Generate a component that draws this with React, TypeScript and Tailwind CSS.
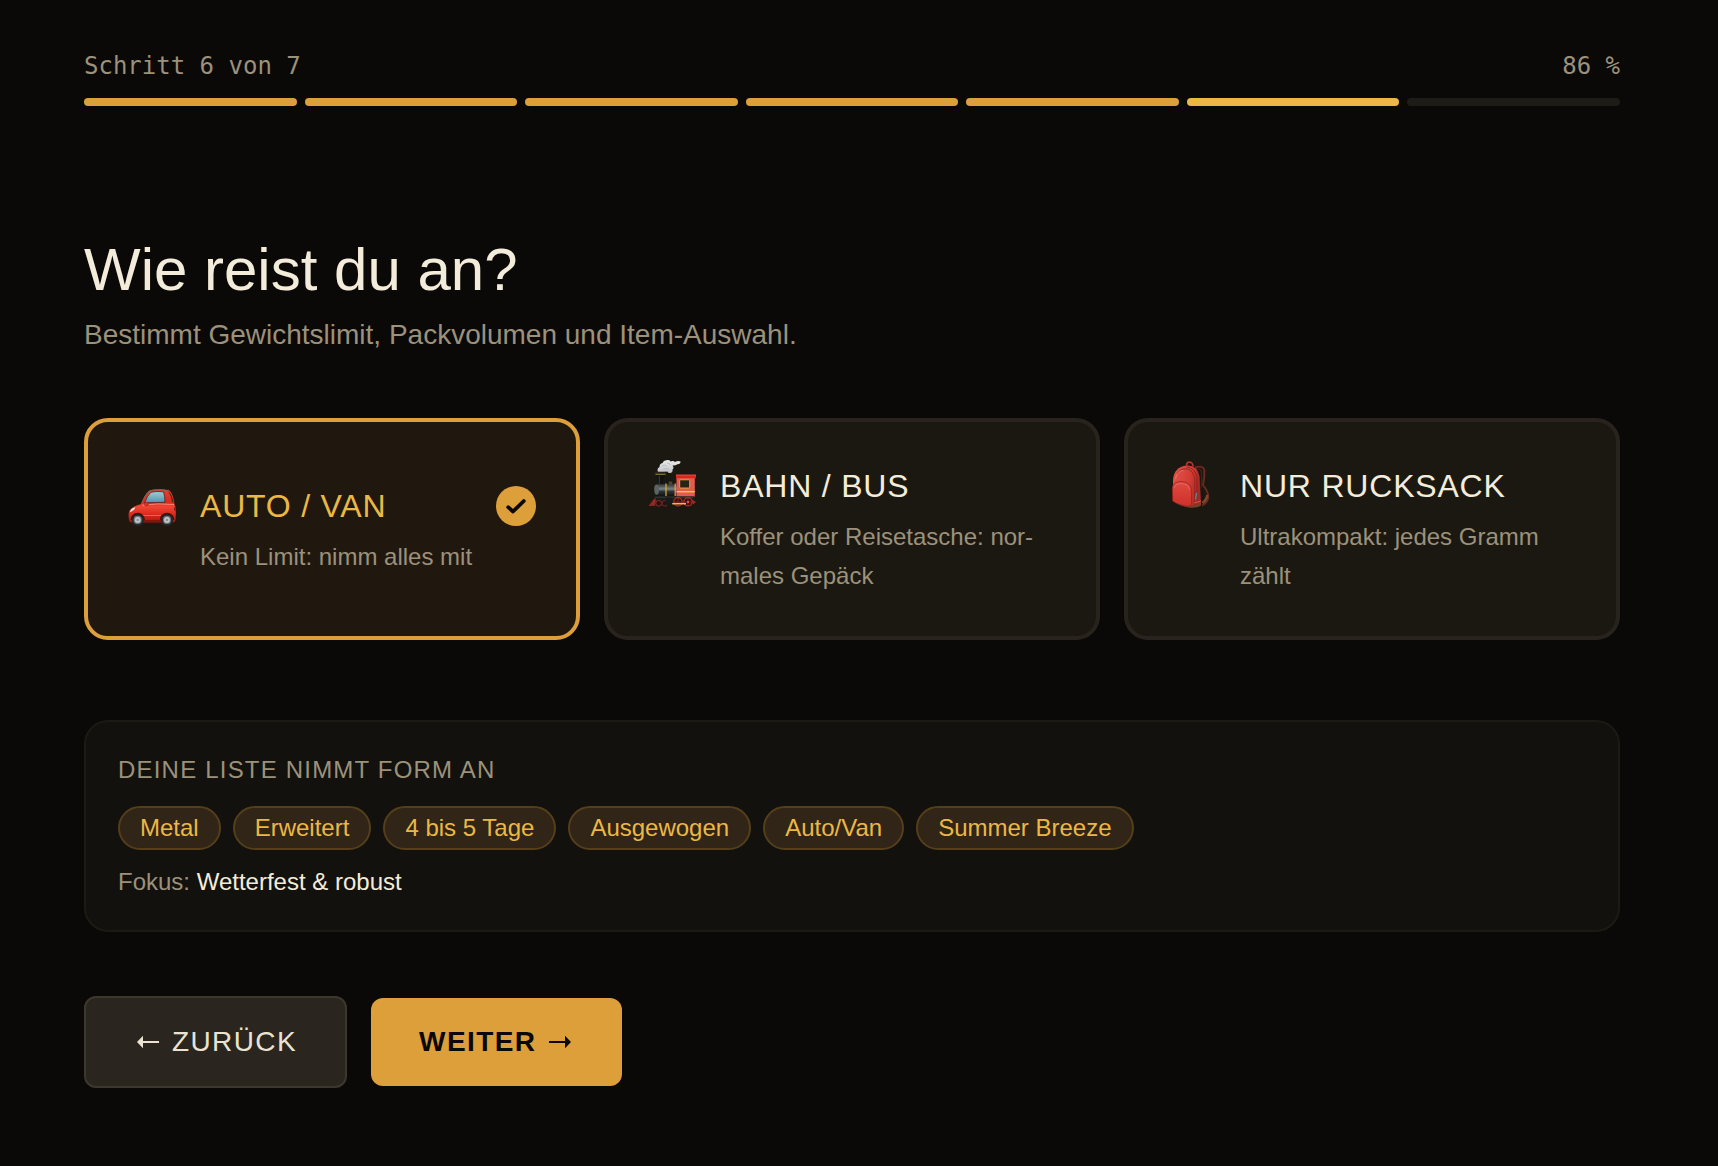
import { useState } from "react";
import type { ReactNode } from "react";

function CarIcon() {
  return (
    <svg viewBox="0 2 48 48" className="size-12 shrink-0 overflow-visible" aria-hidden="true">
      <defs>
        <linearGradient id="carBody" x1="0" y1="0" x2="0" y2="1">
          <stop offset="0" stopColor="#e8402f" />
          <stop offset="0.4" stopColor="#d92a1d" />
          <stop offset="0.52" stopColor="#ee4636" />
          <stop offset="0.72" stopColor="#de2f21" />
          <stop offset="1" stopColor="#a3170f" />
        </linearGradient>
        <linearGradient id="carGlass" x1="0" y1="0" x2="0" y2="1">
          <stop offset="0" stopColor="#9fced6" />
          <stop offset="1" stopColor="#4e93ad" />
        </linearGradient>
      </defs>
      <path d="M40 10L40.5 9" stroke="#555" strokeWidth="0.6" />
      <path d="M1 40Q0 33 1.500 30.500Q4 26.500 13 24Q17 14 21 10.800Q24 9 32 9.200Q39 9.400 42 11Q45.500 15 46.500 24Q48.500 29 47.500 40Q47 42.500 44 42.500H4Q1.500 42.500 1 40Z" fill="url(#carBody)" />
      <path d="M13.500 23.500Q17.500 14 21.500 11Q25 9.600 32 9.700Q38.500 9.800 41.500 11.300" fill="none" stroke="#6c6b69" strokeWidth="0.9" />
      <path d="M16.500 22.800Q19.500 15 23 12.200Q28 11 35.500 11.800Q37 16 37 22.300Z" fill="url(#carGlass)" stroke="#542019" strokeWidth="0.8" />
      <path d="M41 11.500Q44.500 15.500 45.500 22.500L44.200 22Q43 15.500 40.500 11.700Z" fill="#4b2a25" />
      <path d="M14 25.200Q30 23 46 24.500" fill="none" stroke="#ff8b78" strokeWidth="0.9" />
      <path d="M15 35.500H33" stroke="#f77662" strokeWidth="0.7" />
      <path d="M14 41H34" stroke="#7b100c" strokeWidth="1.500" />
      <path d="M2 31.500Q3 28.200 7.200 27.200Q7 30 2.700 32Z" fill="#f6e9e3" />
      <path d="M46.200 26.500Q47.700 29 47.500 31L46 30Z" fill="#7f120d" />
      <ellipse cx="18.500" cy="24" rx="2.100" ry="1.900" fill="#e02d20" stroke="#9c160f" strokeWidth="0.4" />
      <path d="M2.500 40A7.200 7.200 0 0 1 17 40M31.800 40A7.200 7.200 0 0 1 46.300 40" fill="#4a0d09" />
      {[9.7, 39].map((cx) => (
        <g key={cx}>
          <circle cx={cx} cy="39.900" r="6.200" fill="#23262a" />
          <circle cx={cx} cy="39.900" r="4.100" fill="#74787b" />
          <circle cx={cx} cy="39.900" r="2.900" fill="#c3c6c8" />
          <circle cx={cx} cy="39.900" r="1.200" fill="#8a8d90" />
        </g>
      ))}
    </svg>
  );
}

function TrainIcon() {
  return (
    <svg viewBox="0 2 48 48" className="size-12 shrink-0 overflow-visible" aria-hidden="true">
      <defs>
        <linearGradient id="boiler" x1="0" y1="0" x2="0" y2="1">
          <stop offset="0" stopColor="#2b3030" />
          <stop offset="0.4" stopColor="#7c8483" />
          <stop offset="0.6" stopColor="#2d3232" />
          <stop offset="1" stopColor="#0d0f0f" />
        </linearGradient>
        <linearGradient id="smoke" x1="0" y1="0" x2="0" y2="1">
          <stop offset="0" stopColor="#ececee" />
          <stop offset="1" stopColor="#bfc0c3" />
        </linearGradient>
      </defs>
      <path d="M10 12Q8.500 8.500 11.500 7Q11.500 3.500 14.500 3Q15.500 0 18.500 0.200Q21.500 -0.500 22.500 1.500Q25.500 0.500 27 2Q30 0.500 32.500 1.500Q32.800 4 29.500 4.200Q27 6 24.500 5.500Q26.500 8 24.500 9.500Q25 12 22.500 13Q20 13.500 19.500 11.500Q15 12.800 10 12Z" fill="url(#smoke)" />
      <path d="M14 6Q16 4 18.500 6M19 3Q22 3 22.500 5M15 9.500Q18 7.500 21 9.500" fill="none" stroke="#b5b6ba" strokeWidth="0.8" />
      <path d="M7 11.700H18V15H7Z" fill="#26251f" />
      <path d="M7.500 14.300H17.500" stroke="#a98a34" strokeWidth="0.9" />
      <path d="M8 15.200H17L14.800 20V24.500H10V20Z" fill="#111212" />
      <path d="M11.300 16V24" stroke="#3c4040" strokeWidth="1" />
      <rect x="6.500" y="24" width="22.500" height="12.500" rx="3" fill="url(#boiler)" />
      <ellipse cx="8.700" cy="29.800" rx="2.300" ry="5" fill="#5b6463" />
      <path d="M20.700 24.500V22.500Q22.500 19.800 24.300 22.500V24.500Z" fill="#54443c" />
      <path d="M18 23.500V36M27.200 23.500V36" stroke="#d9ac3a" strokeWidth="1.200" />
      <path d="M28.500 18H46.800V37H28.500Z" fill="#e45a4e" />
      <path d="M28 14.700H48V18.200H28Z" fill="#d9271f" />
      <path d="M28 15.100H48" stroke="#f45f4c" strokeWidth="0.7" />
      <rect x="31.700" y="19.800" width="10" height="8.200" rx="0.800" fill="#27241a" stroke="#d9a63b" strokeWidth="1" />
      <path d="M28.500 31.700H46.800" stroke="#f4cc52" strokeWidth="1.300" />
      <path d="M5.500 36.300H46.500V41H5.500Z" fill="#1b1d1d" />
      <path d="M7 37.200H45.500" stroke="#484b4a" strokeWidth="0.700" />
      <path d="M0.300 46L6.200 38.500H8L7.300 46Z" fill="#7d231f" />
      <path d="M2.500 45.500L6.500 40M5 45.500L7 40" stroke="#b03a32" strokeWidth="0.600" />
      <circle cx="10.700" cy="43.300" r="2.900" fill="#251312" stroke="#8f2924" strokeWidth="1" />
      <circle cx="16.800" cy="43.300" r="2.800" fill="#251312" stroke="#7b2420" strokeWidth="1" />
      <rect x="17.500" y="37.500" width="6.500" height="7.500" rx="1" fill="#181a1a" />
      <circle cx="30" cy="41.800" r="4.200" fill="#301312" stroke="#b22d27" strokeWidth="1.200" />
      <circle cx="40" cy="41.800" r="4.200" fill="#301312" stroke="#b22d27" strokeWidth="1.200" />
      <path d="M30 38V46M26 42H34M40 38V46M36 42H44" stroke="#982824" strokeWidth="0.700" />
      <path d="M24.200 43.700H38" stroke="#edbb45" strokeWidth="1.500" />
      <circle cx="40" cy="42" r="1.200" fill="#e94b40" />
      <path d="M43.500 39.500L48 42L45 44.500Z" fill="#a92722" />
    </svg>
  );
}

function BackpackIcon() {
  return (
    <svg viewBox="0 2 48 48" className="size-12 shrink-0 overflow-visible" aria-hidden="true">
      <defs>
        <linearGradient id="packBody" x1="0" y1="0" x2="1" y2="0.300">
          <stop offset="0" stopColor="#e5544a" />
          <stop offset="0.65" stopColor="#d33c34" />
          <stop offset="1" stopColor="#a52a24" />
        </linearGradient>
        <linearGradient id="packPocket" x1="0" y1="0" x2="0" y2="1">
          <stop offset="0" stopColor="#de4a41" />
          <stop offset="1" stopColor="#cf3129" />
        </linearGradient>
      </defs>
      <path d="M27 7.500Q35 5 36.300 10Q36.800 17 35 25Q40.500 32 40.300 37Q40 42.500 34 45.500" fill="none" stroke="#6d2a1f" strokeWidth="1.900" />
      <path d="M28 9.500Q32.500 7.500 33.500 12Q33.700 20 33.200 28" fill="none" stroke="#4a1d17" strokeWidth="1.200" />
      <path d="M34.500 43Q38.500 40 39.300 35" fill="none" stroke="#7d4a30" strokeWidth="2.400" />
      <path d="M18.500 5.500Q18.500 2 21.500 2Q25 2.500 25 6.500" fill="none" stroke="#b8332c" strokeWidth="1.700" />
      <path d="M5 41Q12 46 20 47.500Q29 48.500 33 45.500V40Z" fill="#6e412b" />
      <path d="M5 20Q6 7 18.500 5.500Q29.500 5 31.500 16L33 43Q27 46.500 20 46Q11 45 5 40.500Z" fill="url(#packBody)" />
      <path d="M9 14Q12 8.500 19 8.800Q25.500 10 26.800 20L26.500 45" fill="none" stroke="#8e2420" strokeWidth="0.900" />
      <path d="M18.500 6.800Q27 8 29 17L28.800 39" fill="none" stroke="#851b17" strokeWidth="0.700" />
      <path d="M7.500 19Q9 11 15.500 10.300" fill="none" stroke="#ef7a71" strokeWidth="0.800" />
      <path d="M4.300 29Q4.500 21.500 13 21.500Q23.500 22 23.500 31V43.500Q23 46.500 19.500 46.300Q10 45 4.700 41Z" fill="url(#packPocket)" stroke="#93201b" strokeWidth="0.700" />
      <path d="M6 28Q7.500 23.500 13.500 23.600Q20.500 24 21.500 29.500" fill="none" stroke="#ea6f66" strokeWidth="0.800" />
      <path d="M28.500 33.500L27.500 39" stroke="#607d88" strokeWidth="1.600" strokeLinecap="round" />
      <path d="M26 43L33 41" stroke="#d9655c" strokeWidth="0.800" />
    </svg>
  );
}

function Arrow({ back = false }: { back?: boolean }) {
  return (
    <svg viewBox="0 0 28 28" className="size-7" fill="currentColor" aria-hidden="true">
      {back ? <path d="M3 14L9 7.800V13H25V15H9V20.200Z" /> : <path d="M25 14L19 7.800V13H3V15H19V20.200Z" />}
    </svg>
  );
}

type Option = { id: string; title: string; text: string; icon: ReactNode };

const options: Option[] = [
  { id: "auto", title: "Auto / Van", text: "Kein Limit: nimm alles mit", icon: <CarIcon /> },
  { id: "bahn", title: "Bahn / Bus", text: "Koffer oder Reisetasche: nor\u00ADmales Gepäck", icon: <TrainIcon /> },
  { id: "rucksack", title: "Nur Rucksack", text: "Ultrakompakt: jedes Gramm zählt", icon: <BackpackIcon /> },
];

const tags = ["Metal", "Erweitert", "4 bis 5 Tage", "Ausgewogen", "Auto/Van", "Summer Breeze"];

const segments = ["done", "done", "done", "done", "done", "current", "open"];

function segmentColor(state: string) {
  if (state === "done") return "bg-[#dd9f3a]";
  if (state === "current") return "bg-[#ecb845]";
  return "bg-[#1e1c16]";
}

function OptionCard({ option, selected, onSelect }: { option: Option; selected: boolean; onSelect: () => void }) {
  return (
    <label
      className={`flex cursor-pointer items-center rounded-3xl border-4 p-10 ${
        selected ? "border-[#dd9f3a] bg-[#20180f]" : "border-[#28241d] bg-[#1b1811]"
      }`}
    >
      <input type="radio" name="anreise" value={option.id} checked={selected} onChange={onSelect} className="sr-only" />
      <span className="flex w-full items-start gap-6">
        {option.icon}
        <span className="min-w-0 flex-1 pb-px">
          <span className="flex items-center justify-between">
            <span className={`text-[32px] leading-[48px] tracking-wide uppercase ${selected ? "text-[#ecb845]" : "text-[#f4ecda]"}`}>
              {option.title}
            </span>
            {selected && (
              <span className="flex size-10 items-center justify-center rounded-full bg-[#dd9f3a]">
                <svg viewBox="0 0 24 24" className="size-6" fill="none" stroke="#0a0907" strokeWidth="3.800" strokeLinecap="round" strokeLinejoin="round" aria-hidden="true">
                  <path d="M4.200 13.200L9 17.500L19.800 7" />
                </svg>
              </span>
            )}
          </span>
          <span className="mt-[7px] block text-2xl leading-[39px] text-[#9c917b]">{option.text}</span>
        </span>
      </span>
    </label>
  );
}

export default function App() {
  const [choice, setChoice] = useState("auto");

  return (
    <div lang="de" className="min-h-screen bg-[#0a0907] pt-12 pr-[98px] pb-16 pl-[84px] font-['Liberation_Sans',Arial,sans-serif] text-[#f4ecda]">
      <header>
        <div className="flex justify-between font-['DejaVu_Sans_Mono',monospace] text-2xl leading-9 text-[#9c917b]">
          <span>Schritt 6 von 7</span>
          <span>86 %</span>
        </div>
        <div className="mt-[14px] flex gap-2">
          {segments.map((state, i) => (
            <div key={i} className={`h-2 flex-1 rounded-full ${segmentColor(state)}`} />
          ))}
        </div>
      </header>

      <main className="mt-32">
        <h1 className="text-[60px] leading-[72px]">Wie reist du an?</h1>
        <p className="mt-2 text-[28px] leading-[42px] text-[#9c917b]">Bestimmt Gewichtslimit, Packvolumen und Item-Auswahl.</p>

        <div role="radiogroup" aria-label="Wie reist du an?" className="mt-[62px] grid grid-cols-3 gap-6">
          {options.map((o) => (
            <OptionCard key={o.id} option={o} selected={choice === o.id} onSelect={() => setChoice(o.id)} />
          ))}
        </div>

        <section className="mt-20 rounded-3xl border-2 border-[#1b1a13] bg-[#12110d] p-8 text-2xl leading-8">
          <h2 className="tracking-wider text-[#9c917b] uppercase">Deine Liste nimmt Form an</h2>
          <ul className="mt-5 flex flex-wrap gap-3">
            {tags.map((t) => (
              <li key={t} className="rounded-full border-2 border-[#553f1b] bg-[#302516] px-5 py-1 text-[#ecb845]">
                {t}
              </li>
            ))}
          </ul>
          <p className="mt-4 text-[#9c917b]">
            Fokus: <span className="text-[#f4ecda]">Wetterfest &amp; robust</span>
          </p>
        </section>

        <div className="mt-16 flex items-center gap-6 text-[28px] leading-10">
          <button type="button" className="flex items-center gap-[10px] rounded-xl border-2 border-[#3d382c] bg-[#2a251e] px-12 py-6 tracking-wider text-[#ebe3d2]">
            <Arrow back />
            ZURÜCK
          </button>
          <button type="button" className="flex items-center gap-[10px] rounded-xl bg-[#dd9f3a] px-12 py-6 font-bold tracking-wider text-[#0a0907]">
            WEITER
            <Arrow />
          </button>
        </div>
      </main>
    </div>
  );
}
